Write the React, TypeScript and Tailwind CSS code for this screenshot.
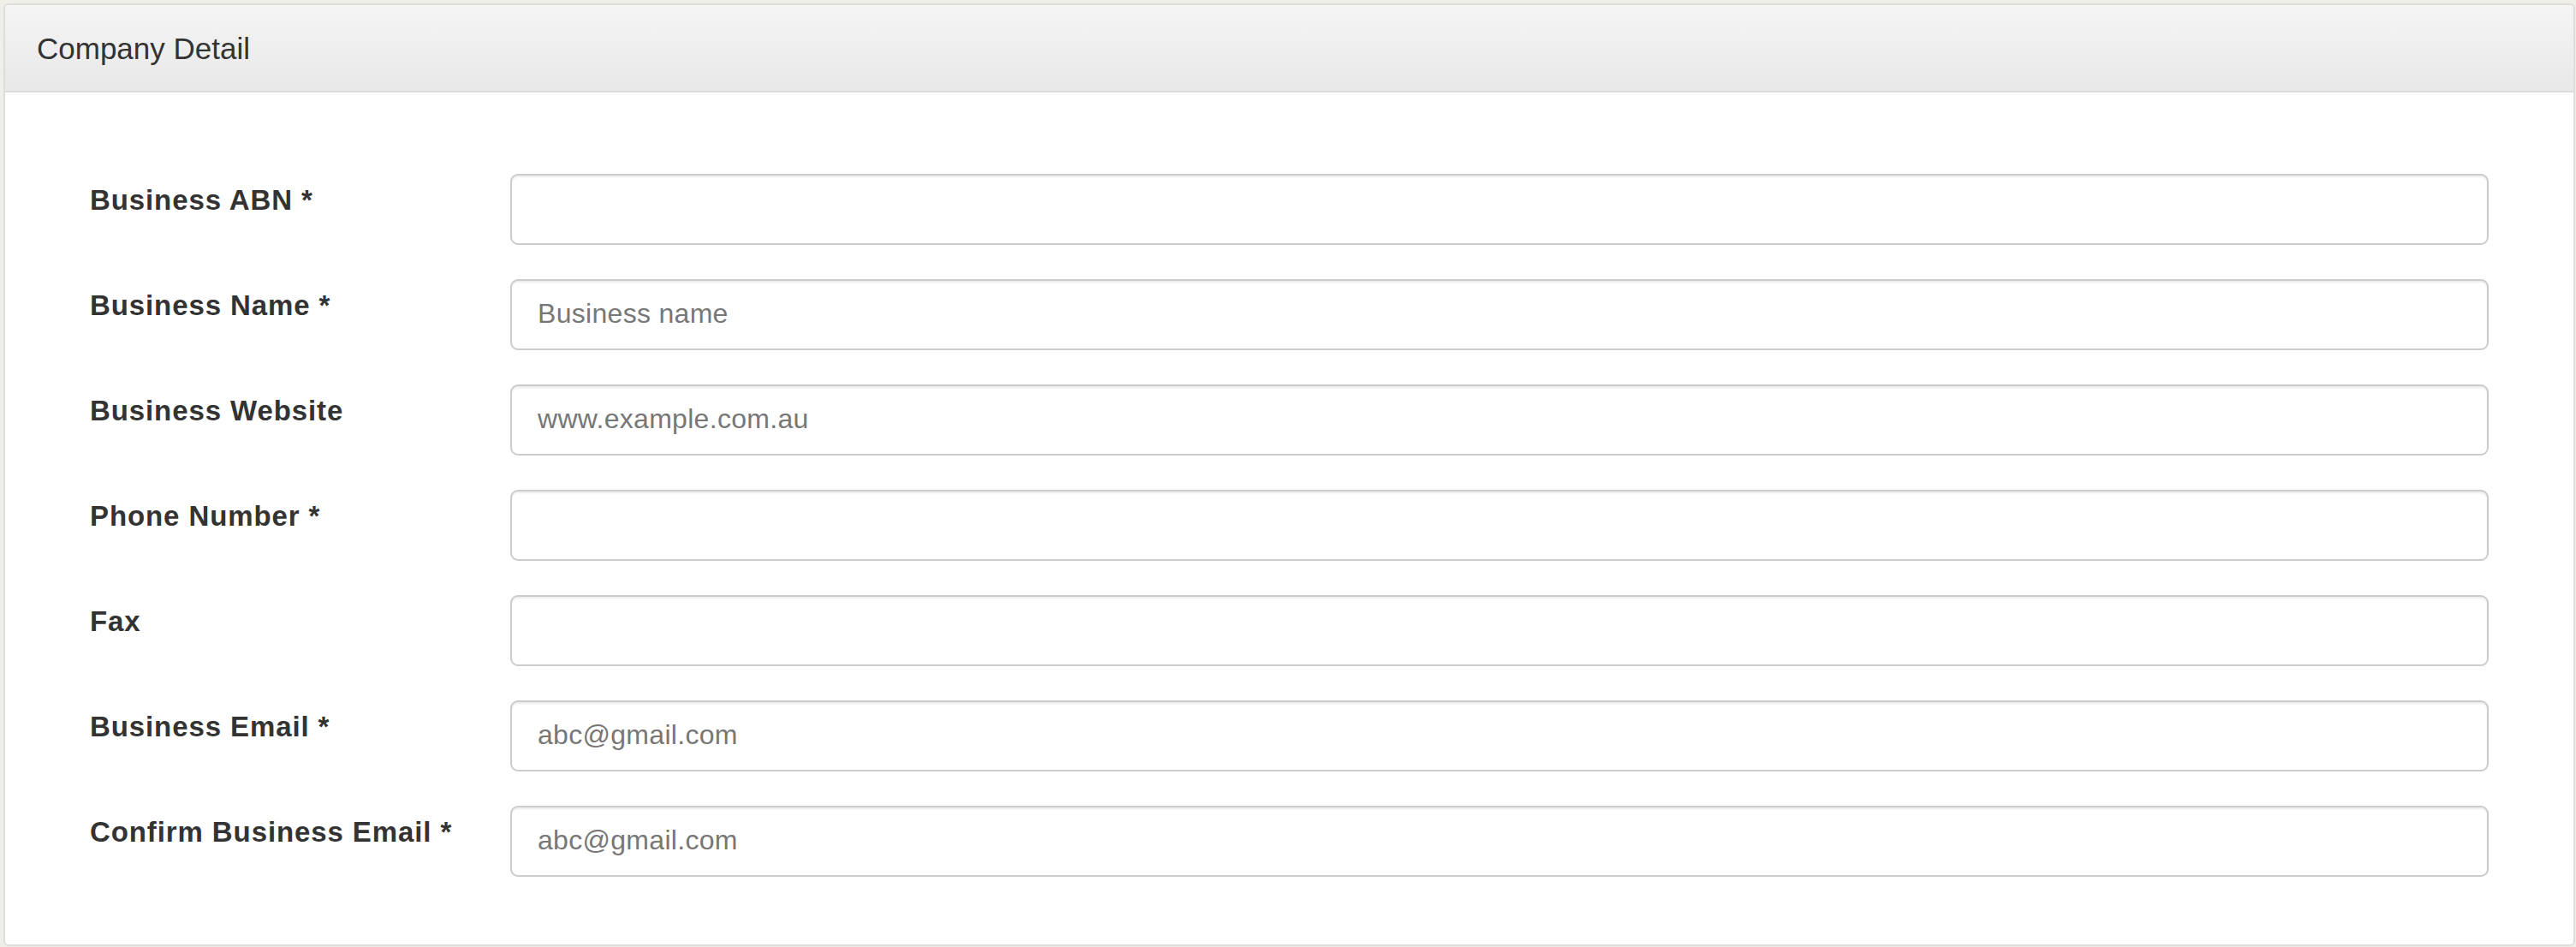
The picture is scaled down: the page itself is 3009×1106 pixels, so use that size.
const fields = [
  { label: 'Business ABN *', placeholder: '' },
  { label: 'Business Name *', placeholder: 'Business name' },
  { label: 'Business Website', placeholder: 'www.example.com.au' },
  { label: 'Phone Number *', placeholder: '' },
  { label: 'Fax', placeholder: '' },
  { label: 'Business Email *', placeholder: 'abc@gmail.com' },
  { label: 'Confirm Business Email *', placeholder: 'abc@gmail.com' },
]

export default function App() {
  return (
    <div className="min-h-screen bg-[#efeee7] pt-[4px] pl-[4px] pr-[1px] pb-[2px] font-['Liberation_Sans',Arial,sans-serif] text-[#333]">
      <div className="rounded-[6px] border-2 border-[#dddddd] bg-white overflow-hidden">
        {/* Heading */}
        <div className="h-[102px] flex items-center pl-[37px] border-b-2 border-[#dddddd] bg-gradient-to-b from-[#f5f5f5] to-[#e8e8e8]">
          <h3 className="text-[35px] leading-none">Company Detail</h3>
        </div>

        {/* Body */}
        <form className="pt-[95px] pb-[79px] pl-[99px] pr-[99px] flex flex-col gap-[40px]">
          {fields.map((f) => (
            <div key={f.label} className="flex items-start">
              <label className="w-[491px] shrink-0 pt-[8px] text-[33px] leading-[46px] font-bold tracking-[0.9px]">{f.label}</label>
              <input
                type="text"
                placeholder={f.placeholder}
                className="flex-1 min-w-0 h-[83px] rounded-[9px] border-2 border-[#cccccc] bg-white px-[30px] pb-[2px] text-[32px] tracking-[0.3px] text-[#555] placeholder:text-[#777] shadow-[inset_0_2px_2px_rgba(0,0,0,0.075)] outline-none"
              />
            </div>
          ))}
        </form>
      </div>
    </div>
  )
}
